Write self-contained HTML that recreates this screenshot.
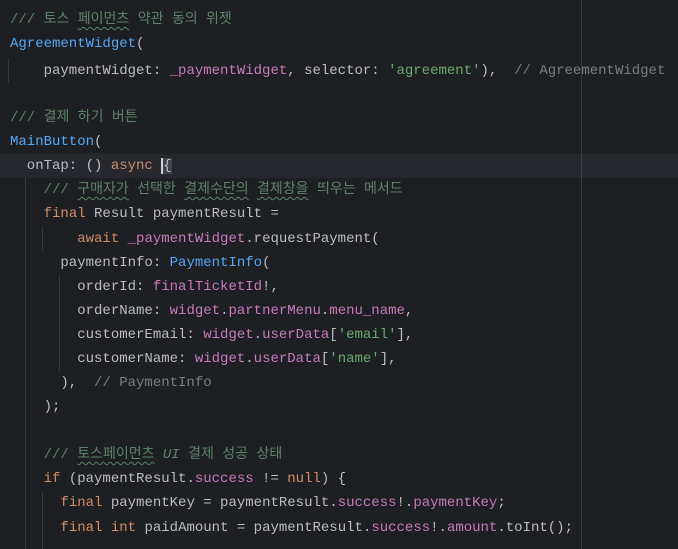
<!DOCTYPE html>
<html><head><meta charset="utf-8"><style>
html,body{margin:0;padding:0;width:678px;height:549px;background:#1e1f22;overflow:hidden;}
.ed{position:relative;width:678px;height:549px;font-family:"Liberation Mono","Noto Sans CJK KR",monospace;font-size:14px;color:#bcbec4;}
.l{position:absolute;left:10px;height:24px;line-height:24px;white-space:pre;}
.cur{position:absolute;left:0;top:154px;width:678px;height:24px;background:#26282e;}
.g{position:absolute;width:1px;background:#393b40;}
.m{position:absolute;left:581px;top:0;width:1px;height:549px;background:#393b40;}
.dc{color:#5f826b}.dc i{font-style:italic}
.c{color:#7a7e85}
.b{color:#56a8f5}.p{color:#c77dbb}.k{color:#cf8e6d}.s{color:#6aab73}
.w{text-decoration:underline wavy #5f826b;text-underline-offset:3px;text-decoration-thickness:1px}
.caret{border-left:2px solid #ced0d6;background:#43454a}
</style></head><body><div class="ed">
<div class="cur"></div>
<div class="m"></div>
<div class="g" style="left:8px;top:59px;height:24px"></div>
<div class="g" style="left:25px;top:178px;height:371px"></div>
<div class="g" style="left:42px;top:227px;height:24px"></div>
<div class="g" style="left:59px;top:275px;height:96px"></div>
<div class="g" style="left:42px;top:492px;height:57px"></div>
<div class="l" style="top:8px"><span class="dc">/// 토스 <span class="w">페이먼츠</span> 약관 동의 위젯</span></div>
<div class="l" style="top:32px"><span class="b">AgreementWidget</span>(</div>
<div class="l" style="top:59px">    paymentWidget: <span class="p">_paymentWidget</span>, selector: <span class="s">'agreement'</span>),  <span class="c">// AgreementWidget</span></div>
<div class="l" style="top:106px"><span class="dc">/// 결제 하기 버튼</span></div>
<div class="l" style="top:130px"><span class="b">MainButton</span>(</div>
<div class="l" style="top:154px">  onTap: () <span class="k">async</span> <span class="caret">{</span></div>
<div class="l" style="top:178px"><span class="dc">    /// <span class="w">구매자가</span> 선택한 <span class="w">결제수단의</span> <span class="w">결제창을</span> 띄우는 메서드</span></div>
<div class="l" style="top:202px">    <span class="k">final</span> Result paymentResult =</div>
<div class="l" style="top:227px">        <span class="k">await</span> <span class="p">_paymentWidget</span>.requestPayment(</div>
<div class="l" style="top:251px">      paymentInfo: <span class="b">PaymentInfo</span>(</div>
<div class="l" style="top:275px">        orderId: <span class="p">finalTicketId</span>!,</div>
<div class="l" style="top:299px">        orderName: <span class="p">widget</span>.<span class="p">partnerMenu</span>.<span class="p">menu_name</span>,</div>
<div class="l" style="top:323px">        customerEmail: <span class="p">widget</span>.<span class="p">userData</span>[<span class="s">'email'</span>],</div>
<div class="l" style="top:347px">        customerName: <span class="p">widget</span>.<span class="p">userData</span>[<span class="s">'name'</span>],</div>
<div class="l" style="top:371px">      ),  <span class="c">// PaymentInfo</span></div>
<div class="l" style="top:395px">    );</div>
<div class="l" style="top:443px"><span class="dc">    /// <span class="w">토스페이먼츠</span> <i>UI</i> 결제 성공 상태</span></div>
<div class="l" style="top:467px">    <span class="k">if</span> (paymentResult.<span class="p">success</span> != <span class="k">null</span>) {</div>
<div class="l" style="top:491px">      <span class="k">final</span> paymentKey = paymentResult.<span class="p">success</span>!.<span class="p">paymentKey</span>;</div>
<div class="l" style="top:516px">      <span class="k">final</span> <span class="k">int</span> paidAmount = paymentResult.<span class="p">success</span>!.<span class="p">amount</span>.toInt();</div>
</div></body></html>
